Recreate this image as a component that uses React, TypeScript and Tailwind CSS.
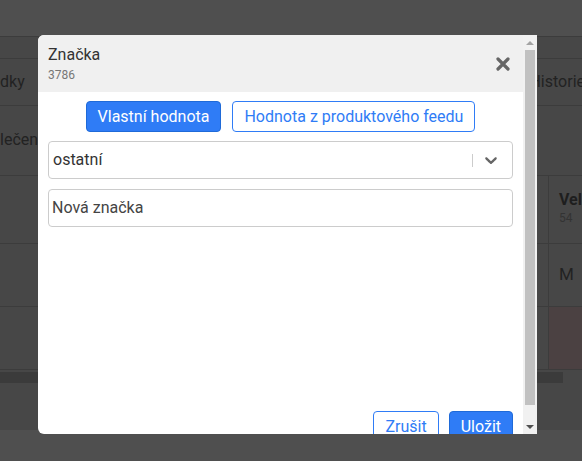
import { FunctionComponent } from "react";

const ChevronDown = () => (
  <svg width="20" height="20" viewBox="0 0 20 20" className="fill-[#666]">
    <path d="M4.516 7.548c0.436-0.446 1.043-0.481 1.576 0l3.908 3.747 3.908-3.747c0.533-0.481 1.141-0.446 1.574 0 0.436 0.445 0.408 1.197 0 1.615-0.406 0.418-4.695 4.502-4.695 4.502-0.217 0.223-0.502 0.335-0.787 0.335s-0.57-0.112-0.789-0.335c0 0-4.287-4.084-4.695-4.502s-0.436-1.17 0-1.615z" />
  </svg>
);

const CloseIcon = () => (
  <svg width="14" height="14" viewBox="0 0 14 14" className="stroke-[#666]">
    <path d="M2 2 L12 12 M12 2 L2 12" strokeWidth="3.2" strokeLinecap="round" />
  </svg>
);

// page behind the dialog, already dimmed by the backdrop
const PageBehind = () => (
  <div className="flex flex-col h-full text-[#222] text-base">
    <div className="h-[36px] bg-[#4f4f4f]" />
    <div className="h-[22px] bg-[#474747] border-t border-[#3c3c3c]" />
    <div className="h-[47px] bg-[#474747] border-t border-[#3c3c3c] flex items-center justify-between">
      <span>dky</span>
      <span className="mr-[-3px]">Historie</span>
    </div>
    <div className="h-[70px] bg-[#474747] border-t border-[#3c3c3c] pt-[22px]">
      <span>lečen</span>
    </div>
    <div className="h-[68px] bg-[#474747] border-t border-[#3c3c3c] flex">
      <div className="flex-1" />
      <div className="w-[34px] border-l border-[#3c3c3c] pl-[10px] pt-[14px] leading-5">
        <div className="font-bold text-[#1e1e1e]">Vel</div>
        <div className="text-xs text-[#333]">54</div>
      </div>
    </div>
    <div className="h-[63px] bg-[#474747] border-t border-[#3c3c3c] flex">
      <div className="flex-1" />
      <div className="w-[34px] border-l border-[#3c3c3c] pl-[10px] flex items-center text-[17px]">M</div>
    </div>
    <div className="h-[63px] bg-[#474747] border-t border-[#3c3c3c] flex">
      <div className="flex-1" />
      <div className="w-[34px] border-l border-[#3c3c3c] bg-[#4b4142]" />
    </div>
    <div className="h-[3px] bg-[#474747] border-t border-[#3c3c3c]" />
    <div className="h-[11px] flex bg-[#474747]">
      <div className="w-[563px] bg-[#3b3b3b]" />
    </div>
    <div className="h-[47px] bg-[#474747]" />
    <div className="flex-1 bg-[#4f4f4f]" />
  </div>
);

const Scrollbar = () => (
  <div className="w-[14px] bg-[#f1f1f1] flex flex-col">
    <div className="h-[15px] flex items-center justify-center">
      <div className="w-0 h-0 border-l-[4px] border-r-[4px] border-b-[4px] border-l-transparent border-r-transparent border-b-[#a3a3a3]" />
    </div>
    <div className="h-[355px] mx-[2px] bg-[#c1c1c1]" />
    <div className="flex-1" />
    <div className="h-[15px] flex items-center justify-center">
      <div className="w-0 h-0 border-l-[4px] border-r-[4px] border-t-[4px] border-l-transparent border-r-transparent border-t-[#505050]" />
    </div>
  </div>
);

const App: FunctionComponent = () => {
  return (
    <div className="relative w-[582px] h-[461px] overflow-hidden font-['Roboto',sans-serif]">
      <PageBehind />

      <div className="absolute left-[38px] top-[35px] w-[499px] h-[399px] flex rounded-l-md overflow-hidden">
        <div className="flex-1 bg-white overflow-hidden">
          <div className="flex items-center justify-between bg-[#f0f0f0] px-[10px] pt-[10px] pb-[9px]">
            <div>
              <h2 className="text-base leading-5 text-[#333]">Značka</h2>
              <div className="mt-[2px] text-xs leading-4 text-[#777]">3786</div>
            </div>
            <button className="mr-[3px] flex items-center">
              <CloseIcon />
            </button>
          </div>

          <div className="px-[10px] pt-[9px] flex flex-col">
            <div className="flex justify-center gap-[11px]">
              <button className="h-[31px] px-[11px] rounded-[4px] border border-[#1f6ad8] bg-[#2f7cf6] text-white text-base">
                Vlastní hodnota
              </button>
              <button className="h-[31px] px-[11px] rounded-[4px] border border-[#2f7cf6] bg-white text-[#2f7cf6] text-base">
                Hodnota z produktového feedu
              </button>
            </div>

            <div className="mt-[9px] h-[38px] flex items-center border border-[#ccc] rounded-[4px]">
              <span className="flex-1 pl-[4px] text-base text-[#333]">ostatní</span>
              <span className="w-px h-[13px] bg-[#ccc]" />
              <span className="ml-[8px] mr-[11px] flex items-center">
                <ChevronDown />
              </span>
            </div>

            <div className="mt-[10px] h-[38px] flex items-center border border-[#ccc] rounded-[4px] pl-[3px] text-base text-[#444]">
              Nová značka
            </div>

            <div className="mt-[184px] flex justify-end gap-[10px]">
              <button className="h-[31px] px-[11px] rounded-[4px] border border-[#2f7cf6] bg-white text-[#2f7cf6] text-base">
                Zrušit
              </button>
              <button className="h-[31px] px-[11px] rounded-[4px] border border-[#1f6ad8] bg-[#2f7cf6] text-white text-base">
                Uložit
              </button>
            </div>
          </div>
        </div>
        <Scrollbar />
      </div>
    </div>
  );
};

export default App;
